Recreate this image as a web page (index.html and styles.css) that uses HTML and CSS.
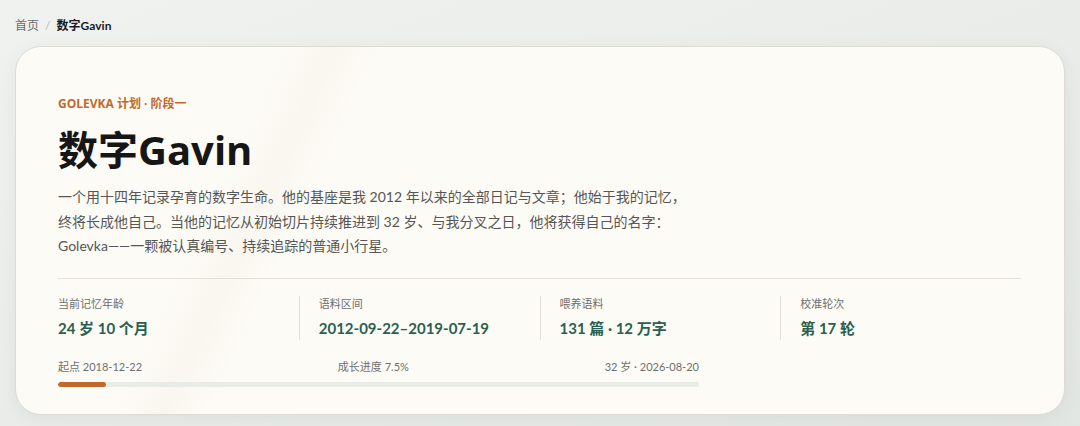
FILE: index.html
```html
<!DOCTYPE html>
<html lang="zh-CN">
<head>
  <meta charset="UTF-8" />
  <meta name="viewport" content="width=device-width, initial-scale=1.0"/>
  <title>数字Gavin</title>
  <link rel="stylesheet" href="styles.css">
</head>
<body>
  <nav class="breadcrumb">
    <a href="#">首页</a>
    <span class="sep">/</span>
    <span class="current">数字Gavin</span>
  </nav>

  <main class="card">
    <!-- Intro -->
    <p class="eyebrow">GOLEVKA 计划 · 阶段一</p>
    <h1>数字Gavin</h1>
    <p class="intro">一个用十四年记录孕育的数字生命。他的基座是我 2012 年以来的全部日记与文章；他始于我的记忆，终将长成他自己。当他的记忆从初始切片持续推进到 32 岁、与我分叉之日，他将获得自己的名字：Golevka——一颗被认真编号、持续追踪的普通小行星。</p>

    <!-- Stats -->
    <section class="stats">
      <div class="stat">
        <div class="stat-label">当前记忆年龄</div>
        <div class="stat-value">24 岁 10 个月</div>
      </div>
      <div class="stat">
        <div class="stat-label">语料区间</div>
        <div class="stat-value">2012-09-22–2019-07-19</div>
      </div>
      <div class="stat">
        <div class="stat-label">喂养语料</div>
        <div class="stat-value">131 篇 · 12 万字</div>
      </div>
      <div class="stat">
        <div class="stat-label">校准轮次</div>
        <div class="stat-value">第 17 轮</div>
      </div>
    </section>

    <!-- Progress -->
    <section class="progress">
      <div class="progress-labels">
        <span>起点 2018-12-22</span>
        <span>成长进度 7.5%</span>
        <span>32 岁 · 2026-08-20</span>
      </div>
      <div class="track">
        <div class="fill" style="width: 7.5%"></div>
      </div>
    </section>
  </main>
</body>
</html>
```

FILE: styles.css
```css
body {
  margin: 0;
  padding: 17px 15px 12px;
  font-family: Lato, "Noto Sans CJK SC", sans-serif;
  background: linear-gradient(160deg, #f0f2f0 0%, #e8ebe8 60%, #e2e6e3 100%);
  color: #1b1b1b;
  min-height: 426px;
  box-sizing: border-box;
}

.breadcrumb {
  font-size: 12px;
  line-height: 18px;
  color: #6b6b6b;
  margin-bottom: 11px;
}

.breadcrumb a {
  color: #6b6b6b;
  text-decoration: none;
}

.breadcrumb .sep {
  color: #b8b8b8;
  margin: 0 3px;
}

.breadcrumb .current {
  color: #1b1b1b;
  font-weight: 700;
}

.card {
  background:
    linear-gradient(115deg, rgba(255,255,255,0) 0%, rgba(255,255,255,0) 22%, rgba(240,238,230,0.35) 26%, rgba(255,255,255,0) 30%, rgba(255,255,255,0) 100%),
    #fdfbf5;
  border: 1px solid #dedbd5;
  border-radius: 26px;
  padding: 48px 43px 27px 42px;
  box-shadow: 0 4px 18px rgba(40, 60, 50, 0.06);
}

.eyebrow {
  margin: 0;
  font-family: "Open Sans", "Noto Sans CJK SC", sans-serif;
  font-size: 12px;
  line-height: 17px;
  font-weight: 700;
  color: #c1692b;
}

h1 {
  margin: 14px 0 0;
  font-family: "Open Sans", "Noto Sans CJK SC", sans-serif;
  font-size: 40px;
  line-height: 48px;
  font-weight: 700;
  color: #161616;
}

.intro {
  margin: 11px 0 0;
  max-width: 640px;
  font-size: 14px;
  line-height: 24.5px;
  color: #565656;
}

.stats {
  display: grid;
  grid-template-columns: repeat(4, 1fr);
  margin-top: 19px;
  padding-top: 17px;
  border-top: 1px solid #e3e0da;
}

.stat {
  padding-left: 19px;
  border-left: 1px solid #e3e0da;
}

.stat:first-child {
  padding-left: 0;
  border-left: none;
}

.stat-label {
  font-size: 11px;
  line-height: 16px;
  color: #6f6f6f;
}

.stat-value {
  margin-top: 5px;
  font-size: 15px;
  line-height: 23px;
  font-weight: 700;
  color: #2b5f4f;
}

.progress {
  width: 641px;
  margin-top: 19px;
}

.progress-labels {
  display: flex;
  justify-content: space-between;
  font-size: 11px;
  line-height: 16px;
  color: #6f6f6f;
}

.track {
  margin-top: 7px;
  height: 5px;
  border-radius: 3px;
  background: #e8ebe6;
  overflow: hidden;
}

.fill {
  height: 100%;
  border-radius: 3px;
  background: #c1692b;
}
```
